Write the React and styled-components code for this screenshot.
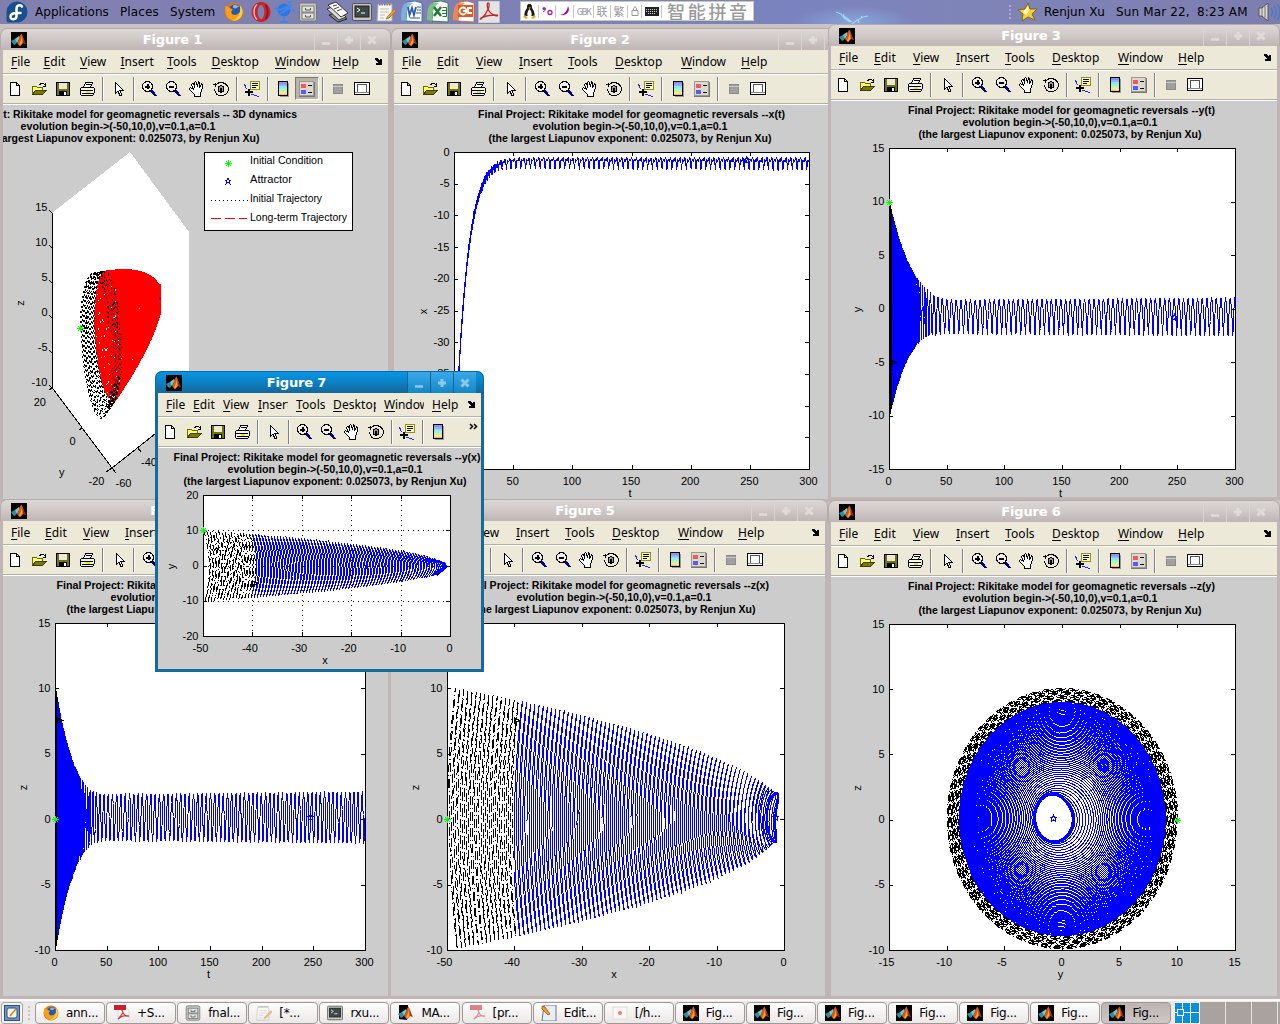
import React from "react";
import styled, { createGlobalStyle, css } from "styled-components";

const Global = createGlobalStyle`
  * { box-sizing: border-box; }
  html, body { margin: 0; padding: 0; overflow: hidden; }
`;

const Screen = styled.div`
  display: flex;
  flex-direction: column;
  width: 1280px;
  height: 1024px;
  overflow: hidden;
  background: #c9c3c2;
  font-family: "DejaVu Sans", sans-serif;
  color: #000;
`;

/* ---------- top panel ---------- */

const TopPanel = styled.header`
  display: flex;
  align-items: center;
  height: 24px;
  flex: none;
  padding-left: 6px;
  background:
    radial-gradient(ellipse 60px 16px at 854px 22px, #86a6d8 0%, rgba(125, 131, 184, 0) 100%),
    linear-gradient(90deg, #8080b0 0%, #7e80b3 35%, #7a83bf 62%, #7f84b8 75%, #7d7eae 100%);
`;
const PanelMenu = styled.nav`
  display: flex;
  margin-left: 7px;
  gap: 12px;
  font-size: 12px;
  width: 186px;
  white-space: nowrap;
`;
const MenuWord = styled.span`
  display: block;
  width: ${(p) => p.$w}px;
  letter-spacing: ${(p) => p.$ls || 0}px;
  white-space: nowrap;
`;
const Launchers = styled.div`
  display: flex;
  width: 284px;
  align-items: center;
`;
const Launcher = styled.span`
  display: flex;
  justify-content: center;
  flex: none;
  width: ${(p) => p.$w}px;
`;
const ImeBar = styled.div`
  display: flex;
  align-items: center;
  align-self: flex-start;
  margin-top: 1px;
  margin-left: 15px;
  width: 234px;
  height: 20px;
  background: #fff;
  border: 1px solid #c9c8bd;
  font-family: "Noto Sans CJK SC", sans-serif;
  color: #999;
  overflow: hidden;
`;
const ImeCell = styled.span`
  display: flex;
  align-items: center;
  justify-content: center;
  flex: none;
  width: ${(p) => p.$w}px;
  height: 13px;
  font-size: ${(p) => p.$fs || 11}px;
  line-height: 13px;
  letter-spacing: ${(p) => p.$ls || 0}px;
  border-right: 1px solid #ccc8b8;
`;
const ImeName = styled.span`
  margin-left: 5px;
  font-size: 18px;
  line-height: 18px;
  font-weight: 500;
  letter-spacing: 2.7px;
  color: #9a9a9a;
  white-space: nowrap;
`;
const Wallpaper = styled.span`
  display: flex;
  align-self: flex-end;
  width: 255px;
  padding-left: 81px;
`;
const PanelRight = styled.div`
  display: flex;
  align-items: center;
  font-size: 12px;
  white-space: nowrap;
`;
const UserBadge = styled.span`
  display: flex;
  justify-content: center;
  width: 32px;
`;

const SvgBox = styled.svg`
  display: block;
  flex: none;
`;
const Svg = ({ s = 16, w, h, vb, crisp, children }) => (
  <SvgBox width={w || s} height={h || s} viewBox={vb || "0 0 16 16"} shapeRendering={crisp ? "crispEdges" : "auto"}>
    {children}
  </SvgBox>
);

const Fedora = () => (
  <Svg s={22} vb="0 0 22 22">
    <path d="M11 0.5a10.5 10.5 0 1 1 0 21H2.5A2 2 0 0 1 .5 19.500V11A10.5 10.5 0 0 1 11 .5z" fill="#174f8f" />
    <path d="M16 5.500C15.500 4 11 3 10.500 7.500V15c0 4-6 4.500-6 .8 0-2.500 2.500-3.800 6-3.800h4" fill="none" stroke="#fff" strokeWidth="2.500" strokeLinecap="round" />
  </Svg>
);
const Firefox = ({ s = 20 }) => (
  <Svg s={s} vb="0 0 20 20">
    <circle cx="10" cy="10" r="9.300" fill="#e2730f" />
    <circle cx="11" cy="8.500" r="6" fill="#2a57a8" />
    <path d="M9 3.500c2-1 5 0 6 1l-3 2-3-.5z" fill="#7fb4e6" />
    <path d="M1.500 4C5 4.500 6 7 9 7.500 7.500 9 6.500 10 8 12c2 2 6 1 8-2 1 5-3 8-7 8S0 14 1.500 4z" fill="#f7a11b" />
    <path d="M16 3.500c3 3 3.500 8 1 11.500-2 3-6 4.500-9 3.500 5-1 9-5 8-15z" fill="#fbd23b" />
  </Svg>
);
const Opera = () => (
  <Svg s={22} vb="0 0 22 22">
    <path fillRule="evenodd" d="M11 1a9.500 10 0 1 0 .01 0zM11 4a3.300 7 0 1 1-.01 0z" fill="#c4282c" />
    <path d="M7 3.500C3 7 3 15 7 18.500" stroke="#f2b6b4" fill="none" strokeWidth="1.500" />
    <path d="M15.500 4c3 4 3 10 0 14" stroke="#8e1014" fill="none" strokeWidth="1.500" />
  </Svg>
);
const Globe = () => (
  <Svg s={22} vb="0 0 22 22">
    <circle cx="11" cy="9" r="6.500" fill="#2f76df" />
    <path d="M2 7l5 2 12-5M5 14l13-8M11 15v5M7 21h8" stroke="#3e86ec" strokeWidth="2" fill="none" />
    <path d="M15 2l4-2M19 9l3 1" stroke="#3e86ec" strokeWidth="2" />
  </Svg>
);
const Cabinet = ({ s = 20 }) => (
  <Svg s={s} vb="0 0 20 20">
    <rect x="1.500" y="1" width="17" height="18" rx="2" fill="#c9c9c2" stroke="#777" />
    <rect x="4" y="4" width="12" height="6" fill="#e4e4de" stroke="#777" />
    <rect x="4" y="11" width="12" height="6" fill="#e4e4de" stroke="#777" />
    <path d="M7.500 6v2h5V6M7.500 13v2h5v-2" stroke="#555" fill="none" />
  </Svg>
);
const Papers = () => (
  <Svg s={22} vb="0 0 22 22">
    <path d="M3 14l8-3 10 7-9 3z" fill="#888" stroke="#222" />
    <path d="M1 8l8-3 11 11-7 3z" fill="#ddd" stroke="#333" />
    <path d="M2 4l8-3 12 11-7 4z" fill="#fff" stroke="#333" />
    <path d="M7 5l4-1M8 8l5-2M11 10l5-2" stroke="#444" />
  </Svg>
);
const Terminal = ({ s = 20 }) => (
  <Svg s={s} vb="0 0 20 20">
    <rect x=".5" y="1.500" width="19" height="17" rx="1.500" fill="#c6c6be" stroke="#555" />
    <rect x="3" y="4" width="14" height="11" fill="#3d4849" stroke="#222" />
    <path d="M5 6l3 2-3 2M9 11h4" stroke="#fff" fill="none" />
  </Svg>
);
const Notepad = ({ s = 20 }) => (
  <Svg s={s} vb="0 0 20 20">
    <path d="M2 2h14v17H1z" fill="#f7f7f2" stroke="#aaa" />
    <path d="M3 2.500h12" stroke="#777" strokeWidth="2" strokeDasharray="1.500 1" />
    <path d="M4 7h9M4 10h9M4 13h5M4 16h4" stroke="#bbb" />
    <path d="M18.500 7l-7 7.500-1.500 2.500 3-1 7-7z" fill="#f29a2b" stroke="#b3600b" strokeWidth=".7" />
  </Svg>
);
const Office = ({ c1, c2, kind }) => (
  <Svg s={22} vb="0 0 22 22">
    <path d="M6 1l8-1 7 2v19l-16-1z" fill="#fdfdfd" stroke={c2} strokeWidth=".8" />
    <path d="M0 19C0 9 1 3 7 1l5 1C7 5 5 11 5 20z" fill={c1} opacity=".9" />
    {kind === "w" && <path d="M7 6l1.500 8 2.500-7 2 7L15 6" stroke={c2} strokeWidth="1.800" fill="none" />}
    {kind === "w" && <path d="M16 6h4M16 9h4M15 12h5M9 17h10" stroke={c2} strokeWidth="1" />}
    {kind === "x" && <path d="M7 6l7 9M14 6l-7 9" stroke={c2} strokeWidth="2.500" fill="none" />}
    {kind === "x" && <path d="M15.500 6.500h4v9h-4M15 9.500h5M15 12.500h5" stroke={c2} strokeWidth="1" fill="none" />}
    {kind === "p" && <rect x="5" y="4" width="15" height="12" fill={c2} />}
    {kind === "p" && (
      <g stroke="#fff" strokeWidth="1.800" fill="none">
        <circle cx="10" cy="10" r="3.500" />
        <path d="M19 7h-4v5h4M10 10h4" />
      </g>
    )}
  </Svg>
);
const Pdf = ({ s = 22 }) => (
  <Svg s={s} vb="0 0 22 22">
    <rect x=".5" y="0" width="21" height="22" fill="#e4e4e4" stroke="#bcbcbc" />
    <path d="M10 2c3 0 0 10-7 16-3 1 2-4 16-4 3 2-6 1-9-6-1-2-1-6 0-6z" fill="none" stroke="#c8232a" strokeWidth="1.300" />
  </Svg>
);
const PdfTask = () => (
  <Svg s={16}>
    <path d="M4 2h8l3 3v11H4z" fill="#f6f6f6" stroke="#ccc" strokeWidth=".6" />
    <rect x="0" y="0" width="12" height="5" fill="#c8202c" />
    <path d="M8 5c2 2-1 6-4 9 3-3 7-4 11-3-4 1-6-2-7-6z" fill="none" stroke="#d2383e" strokeWidth="1.200" />
  </Svg>
);
const Tux = () => (
  <Svg w={13} h={15} vb="0 0 13 15">
    <path d="M6.500 0c2.500 0 2.500 2 2.500 4 2 3 3 5 2.500 8h-10C1 9 2 7 4 4c0-2 0-4 2.500-4z" fill="#191919" />
    <path d="M6.500 5c2 2 3 5 1.500 8H5C3.500 10 4.500 7 6.500 5z" fill="#fff" />
    <path d="M5 3.500h3l-1.500 1.500zM0 13l2-2 3 3-2 1zM13 13l-2-2-3 3 2 1z" fill="#f0a81c" />
  </Svg>
);
const Lightning = () => (
  <Svg w={36} h={14} vb="0 0 36 14">
    <path d="M1 2l5 2 3 4 6 4M8 4l1 2 8 6M33 6l-5 1-7 4-4 3M24 13l-1-4M26 8l1-2" stroke="#a8dcff" strokeWidth="1.200" fill="none" opacity=".85" />
  </Svg>
);
const StarUser = () => (
  <Svg s={20} vb="0 0 20 20">
    <path d="M10 1l2 6 7 0-5 5 3 6-7-3-6 4 1-7-5-4 7-1z" fill="#f4d03a" stroke="#7a6a14" />
    <path d="M10 4l1 5-3 4-3-3z" fill="#fff6b8" />
  </Svg>
);
const Speaker = () => (
  <Svg w={22} h={20} vb="0 0 22 20">
    <path d="M1 6h3l6-5v18l-6-5H1z" fill="#d9d9d4" stroke="#555" />
    <path d="M4 6v8M7 4v12" stroke="#777" />
    <path d="M13 6c2 2 2 6 0 8M16 4c3 3 3 9 0 12M19 2c4 4 4 12 0 16" fill="none" stroke="#4b79c6" strokeWidth="1.500" />
  </Svg>
);
const Grip = ({ c = "#a9a9c9" }) => (
  <Svg w={3} h={16} vb="0 0 3 16" crisp>
    {[0, 4, 8, 12].map((y) => <rect key={y} x="0" y={y + 1} width="2" height="2" fill={c} />)}
  </Svg>
);
const MatlabLogo = ({ s = 16, plain }) => (
  <Svg s={s}>
    {!plain && <rect width="16" height="16" fill="#000" />}
    {plain && <path d="M1 0h9v8L9 15 1 14z" fill="#000" />}
    <path d="M0 9l4-2 2-1 1 2-2 4-2 1z" fill="#2f8f9f" />
    <path d="M4 7l4-3 1 2-3 5z" fill="#74c4c8" />
    <path d="M6 11c2-2 2-7 4.500-9.500C12 4 13 9 15 12l-3-1-3 3.500z" fill="#d9541a" />
    <path d="M10.300 2.500c.5 3-.3 7-2.300 10l1.200 1 2.300-3z" fill="#f7a427" />
    <path d="M11.500 4c1 3 1.500 5.500 3 7.500L12.500 11z" fill="#8c1d0c" />
  </Svg>
);

/* ---------- windows ---------- */

const Desktop = styled.main`
  position: relative;
  flex: 1;
  overflow: hidden;
`;
const Frame = styled.section`
  position: absolute;
  left: ${(p) => p.$x}px;
  top: ${(p) => p.$y - 24}px;
  width: ${(p) => p.$w}px;
  height: ${(p) => p.$h}px;
  display: flex;
  flex-direction: column;
  padding: 0 3px 3px;
  background: ${(p) => (p.$active ? "#146a98" : "#bfb5b5")};
  border-radius: 7px 7px 0 0;
  overflow: hidden;
`;
const TitleBar = styled.div`
  display: flex;
  align-items: center;
  height: 22px;
  flex: none;
  margin: 0 -3px;
  padding: 0 7px 0 10px;
  border: 1px solid ${(p) => (p.$active ? "#0c6ba5" : "#b4abaa")};
  border-bottom: 0;
  border-radius: 7px 7px 0 0;
  background: ${(p) =>
    p.$active
      ? "linear-gradient(#0695e6, #0b83c6 45%, #14679a)"
      : "linear-gradient(#dcd7d6, #cfc8c7 50%, #beb5b4)"};
`;
const TitleText = styled.h2`
  flex: 1;
  margin: 0;
  padding-left: 4px;
  text-align: center;
  font-size: 13px;
  font-weight: bold;
  line-height: 21px;
  letter-spacing: -0.15px;
  color: #fff;
`;
const TitleButton = styled.span`
  display: flex;
  align-items: center;
  justify-content: center;
  width: 23px;
  height: 21px;
  ${(p) =>
    p.$active
      ? css`
          background: linear-gradient(#37a9ea, #1786c4);
          border-left: 1px solid #0d659c;
          color: #8cc9ec;
        `
      : css`
          border-left: 1px solid #d9d4d3;
          color: #e0dbda;
        `}
`;
const Menu = styled.div`
  display: flex;
  align-items: center;
  height: 24px;
  flex: none;
  padding-left: 8px;
  background: #ece9d8;
  border-bottom: 1px solid #b3b1a4;
  font-family: "Noto Sans", sans-serif;
  font-size: 12px;
  line-height: 16px;
`;
const MenuItem = styled.span`
  flex: none;
  width: ${(p) => p.$w}px;
  margin-right: ${(p) => p.$gap}px;
  overflow: ${(p) => (p.$clip ? "hidden" : "visible")};
  white-space: nowrap;
  letter-spacing: ${(p) => p.$ls}px;
  u { text-underline-offset: 2px; }
`;
const MenuEnd = styled.span`
  display: flex;
  margin-left: auto;
  margin-right: 6px;
`;
const Toolbar = styled.div`
  display: flex;
  align-items: center;
  height: 31px;
  flex: none;
  padding-bottom: 2px;
  background: #ece9d8;
  border-top: 1px solid #fff;
  border-bottom: 1px solid #fff;
  box-shadow: inset 0 -1px #b3b1a4;
`;
const Tool = styled.span`
  display: flex;
  align-items: center;
  justify-content: center;
  flex: none;
  width: 24px;
  height: 23px;
  ${(p) =>
    p.$on &&
    css`
      border: 1px solid #777;
      border-right-color: #fff;
      border-bottom-color: #fff;
      background: #b9b5a6;
    `}
`;
const Separator = styled.i`
  flex: none;
  height: 24px;
  width: 2px;
  margin: 0 ${(p) => (p.$slot - 2) / 2}px;
  border-left: 1px solid #808080;
  border-right: 1px solid #fff;
`;
const More = styled.span`
  margin-left: auto;
  margin-right: 3px;
  align-self: flex-start;
  padding-top: 5px;
`;
const Canvas = styled.div`
  flex: 1;
  min-height: 0;
  background: #ccc;
  overflow: hidden;
`;

const tools = {
  new: <path d="M3.500 1.500h6l3 3v10h-9zM9.500 1.500v3h3" fill="#fff" stroke="#000" />,
  open: (
    <g>
      <path d="M1.500 13.500v-8h4l1 1h5v3" fill="#ffff66" stroke="#6b6b00" />
      <path d="M1.500 13.500l3-4h11l-4 4z" fill="#7a7a00" stroke="#3d3d00" />
      <path d="M8.500 3.500l2-1h2l2 2M14.500 2v3h-3" fill="none" stroke="#000" />
    </g>
  ),
  save: (
    <g>
      <rect x="1.500" y="1.500" width="13" height="13" fill="#737300" stroke="#000" />
      <rect x="4" y="2" width="8" height="6" fill="#ece9d8" />
      <rect x="4" y="10" width="8" height="4" fill="#000" />
      <rect x="9" y="11" width="2" height="3" fill="#fff" />
    </g>
  ),
  print: (
    <g>
      <path d="M4.500 6.500l2-5h7l-2 5z" fill="#fff" stroke="#000" />
      <path d="M1.500 7.500l2-1.500h11l1 1.500v4l-2 3h-11l-1-1z" fill="#f4f4ec" stroke="#000" />
      <path d="M1 9.500h13M3 12.500h11M7 3.500h5" stroke="#000" />
      <path d="M7 11h4" stroke="#f1ec00" strokeWidth="2" />
    </g>
  ),
  arrow: <path d="M5.500 1.500v11l2.500-2.500 2 5 2-1-2-4.500h3.500z" fill="#fff" stroke="#000" />,
  zin: (
    <g>
      <circle cx="6.500" cy="5.500" r="5" fill="#f1efe6" stroke="#000" />
      <path d="M4 5.500h5" stroke="#000" strokeWidth="2" />
      <path d="M6.500 3v5" stroke="#000" strokeWidth="2" />
      <path d="M10 9.500l5 5.500" stroke="#000080" strokeWidth="2.500" />
    </g>
  ),
  zout: (
    <g>
      <circle cx="6.500" cy="5.500" r="5" fill="#f1efe6" stroke="#000" />
      <path d="M4 5.500h5" stroke="#000" strokeWidth="2" />
      <path d="M10 9.500l5 5.500" stroke="#000080" strokeWidth="2.500" />
    </g>
  ),
  hand: <path d="M5.500 15.500v-2l-5-5v-1l1-1 3 2-2-5 1-1 1 .5 1.500 3.500-.5-5 1-1 1 1 1 4 1-4.500 1.500.5-.5 5 2-3.500 1.500.5-1 5-1.500 4v3z" fill="#fff" stroke="#000" />,
  rotate: (
    <g fill="none" stroke="#000">
      <path d="M2.500 4.500C5 .500 11 .500 14 4.500s.500 9-4 10-9-2-8-6.500M0 3.500h4M2 1.500v4" />
      <path d="M5.500 6l2.500-1.500L10.500 6v4L8 11.500 5.500 10z" fill="#999" />
      <path d="M8 7v4" strokeWidth="2" />
    </g>
  ),
  data: (
    <g>
      <path d="M.5 3l1 3 1 2M7 13l3 1 5 1.500" stroke="#2525ff" fill="none" />
      <path d="M1 11h8M5 7.500v7.500" stroke="#000" strokeWidth="2" />
      <rect x="6.500" y=".5" width="9" height="8" fill="#ffffa8" stroke="#918c26" />
      <path d="M8 2.500h6M8 4.500h6M8 6.500h4" stroke="#000" />
    </g>
  ),
  colorbar: (
    <g>
      <path d="M13.500 2v13.500H5" stroke="#999" fill="none" />
      {["#8f8ff5", "#8fb0f5", "#8fe3f5", "#96f3dc", "#c6f5a0", "#f5e790", "#f5b090"].map((c, i) => (
        <rect key={c} x="4" y={1 + i * 2} width="9" height="2" fill={c} />
      ))}
      <rect x="3.500" y=".5" width="9" height="14" fill="none" stroke="#000" />
    </g>
  ),
  legend: (
    <g>
      <rect x=".5" y=".5" width="14" height="14" fill="#ddd8cc" stroke="#999" />
      <path d="M0 15.500h15.500V1" fill="none" stroke="#777" />
      <rect x="2" y="3" width="5" height="4" fill="#ea5c62" />
      <rect x="2" y="9" width="5" height="4" fill="#5c5cea" />
      <path d="M9 4.500h4M9 11.500h4" stroke="#000" />
    </g>
  ),
  hide: (
    <g>
      <rect x="3.500" y="3.500" width="9" height="9" fill="#a0a0a0" stroke="#8b8b8b" />
      <path d="M3 5.500h10" stroke="#c8c8c0" />
    </g>
  ),
  dock: (
    <g>
      <rect x=".5" y="1.500" width="15" height="12" fill="#fff" stroke="#000" />
      <rect x="3.500" y="3.500" width="9" height="8" fill="#fff" stroke="#555" />
      <path d="M1 11.500h14" stroke="#888" />
    </g>
  ),
};
const toolOrder = ["new", "open", "save", "print", "|", "arrow", "|", "zin", "zout", "hand", "rotate", "|", "data", "|", "colorbar", "legend", "|", "hide", "dock"];
const menuWords = [
  ["File", 19, 0], ["Edit", 23, 0.1], ["View", 27, 0], ["Insert", 33, 0],
  ["Tools", 31, 0.1], ["Desktop", 50, 0.1], ["Window", 44, -0.1], ["Help", 28, 0.1],
];
const clippedWidths = [19, 22, 27, 30, 29, 43, 40, 28];

const Glyph = ({ kind }) => (
  <Svg s={12} vb="0 0 12 12">
    <path
      d={kind === "min" ? "M2 9.500h8" : kind === "max" ? "M6 2v8M2 6h8" : "M2.500 2.500l7 7M9.500 2.500l-7 7"}
      stroke="currentColor"
      strokeWidth={kind === "min" ? 2.500 : 3}
      fill="none"
    />
  </Svg>
);

function FigureWindow({ n, x, y, w, h, gap, slot, active, pressed, compact, children }) {
  const order = compact ? toolOrder.slice(0, 15) : toolOrder;
  return (
    <Frame $x={x} $y={y} $w={w} $h={h} $active={active}>
      <TitleBar $active={active}>
        <MatlabLogo />
        <TitleText>Figure {n}</TitleText>
        {["min", "max", "close"].map((k) => (
          <TitleButton key={k} $active={active}><Glyph kind={k} /></TitleButton>
        ))}
      </TitleBar>
      <Menu>
        {menuWords.map(([word, width, ls], i) => (
          <MenuItem key={word} $w={compact ? clippedWidths[i] : width} $gap={gap} $ls={ls} $clip={compact}>
            <u>{word[0]}</u>{word.slice(1)}
          </MenuItem>
        ))}
        <MenuEnd>
          <Svg w={7} h={7} vb="0 0 7 7" crisp>
            <path d="M0 0l2 0 3 3V1h2v6H1V5h2.500L0 1.500z" fill="#000" />
          </Svg>
        </MenuEnd>
      </Menu>
      <Toolbar>
        {order.map((t, i) =>
          t === "|" ? (
            <Separator key={i} $slot={slot} />
          ) : (
            <Tool key={i} $on={pressed && t === "legend"}><Svg crisp>{tools[t]}</Svg></Tool>
          )
        )}
        {compact && (
          <More>
            <Svg w={9} h={7} vb="0 0 9 7"><path d="M1 1l2.500 2.500L1 6M5 1l2.500 2.500L5 6" stroke="#000" strokeWidth="1.500" fill="none" /></Svg>
          </More>
        )}
      </Toolbar>
      <Canvas>
        <SvgBox width={w - 6} height={h - 80} viewBox={`${x + 3} ${y + 77} ${w - 6} ${h - 80}`}>
          {children}
        </SvgBox>
      </Canvas>
    </Frame>
  );
}

/* ---------- Rikitake dynamo: x' = -vx + zy, y' = -vy + (z-a)x, z' = 1 - xy ---------- */

const V = 0.1;
const A = 0.1;
const SPLIT = 2.2;

function integrate() {
  const f = (p) => [-V * p[0] + p[2] * p[1], -V * p[1] + (p[2] - A) * p[0], 1 - p[0] * p[1]];
  const add = (p, k, s) => [p[0] + k[0] * s, p[1] + k[1] * s, p[2] + k[2] * s];
  let p = [-50, 10, 0];
  let t = 0;
  const out = [[0, ...p]];
  let n = 0;
  while (t < 300) {
    const h = 0.025 / Math.max(1, Math.abs(p[0]));
    const k1 = f(p);
    const k2 = f(add(p, k1, h / 2));
    const k3 = f(add(p, k2, h / 2));
    const k4 = f(add(p, k3, h));
    p = p.map((c, i) => c + (h / 6) * (k1[i] + 2 * k2[i] + 2 * k3[i] + k4[i]));
    t += h;
    n += 1;
    if (n % 5 === 0) out.push([t, ...p]);
  }
  return out;
}
const orbit = integrate();
const early = orbit.filter((p) => p[0] <= SPLIT);
const late = orbit.filter((p) => p[0] >= SPLIT && p[0] <= 300);
const trace = (pts, map) => "M" + pts.map((p) => map(p).map((c) => c.toFixed(1)).join(" ")).join("L");

const Label = styled.text`
  font-family: "Liberation Sans", sans-serif;
  font-size: 11px;
  fill: #000;
`;
const Heading = styled.text`
  font-family: "Liberation Sans", sans-serif;
  font-size: 11px;
  font-weight: bold;
  text-anchor: middle;
  fill: #000;
`;

const Titles = ({ cx, y, first, w1 = 307, cx1 }) => (
  <g>
    <Heading x={cx1 || cx + 1.5} y={y} textLength={w1} lengthAdjust="spacingAndGlyphs">{`Final Project: Rikitake model for geomagnetic reversals ${first}`}</Heading>
    <Heading x={cx} y={y + 12} textLength={195} lengthAdjust="spacingAndGlyphs">evolution begin-&gt;(-50,10,0),v=0.1,a=0.1</Heading>
    <Heading x={cx} y={y + 24} textLength={283} lengthAdjust="spacingAndGlyphs">(the largest Liapunov exponent: 0.025073, by Renjun Xu)</Heading>
  </g>
);

const Asterisk = ({ x, y }) => (
  <path d={`M${x - 3.5} ${y}h7M${x} ${y - 3.5}v7M${x - 2.5} ${y - 2.5}l5 5M${x + 2.5} ${y - 2.5}l-5 5`} stroke="#0f0" fill="none" />
);
const Pentagram = ({ x, y }) => (
  <path d={`M${x} ${y - 3}l1 2h2l-1.500 1.500 .5 2.500-2-1.500-2 1.500 .5-2.500-1.500-1.500h2z`} stroke="#00f" fill="none" />
);
const Flag = ({ x, y }) => <path d={`M${x - 2} ${y - 2.5}v5l5-2.500z`} stroke="#000" fill="none" />;

function Plot({ box, xr, yr, xt, yt, xl, yl, yLabelX, xLabelY, ix, iy, grid, start, flag, attractor, tickY, dash = "6 3 1 3" }) {
  const [x0, y0, x1, y1] = box;
  const sx = (v) => x0 + ((v - xr[0]) / (xr[1] - xr[0])) * (x1 - x0) + 0.5;
  const sy = (v) => y1 - ((v - yr[0]) / (yr[1] - yr[0])) * (y1 - y0) + 0.5;
  const map = (p) => [sx(p[ix]), sy(p[iy])];
  const r = (v) => Math.floor(v) + 0.5;
  const my = (y0 + y1) / 2;
  return (
    <g>
      <rect x={x0} y={y0} width={x1 - x0} height={y1 - y0} fill="#fff" />
      <g shapeRendering="crispEdges" fill="none" stroke="#000">
        {grid && xt.map((v) => <path key={`gx${v}`} d={`M${r(sx(v))} ${y0}V${y1}`} strokeDasharray="1 4" />)}
        {grid && yt.map((v) => <path key={`gy${v}`} d={`M${x0} ${r(sy(v))}H${x1}`} strokeDasharray="1 4" />)}
        <rect x={x0 + 0.5} y={y0 + 0.5} width={x1 - x0} height={y1 - y0} />
        {xt.map((v) => <path key={v} d={`M${r(sx(v))} ${y0}v4M${r(sx(v))} ${y1}v-4`} />)}
        {yt.map((v) => <path key={v} d={`M${x0} ${r(sy(v))}h4M${x1} ${r(sy(v))}h-4`} />)}
        <path d={trace(early, map)} strokeDasharray={dash} />
        <path d={trace(late, map)} stroke="#00f" />
        <Asterisk x={r(sx(start[0]))} y={r(sy(start[1]))} />
        {flag && <Flag x={r(sx(flag[0]))} y={r(sy(flag[1]))} />}
        {attractor && <Pentagram x={r(sx(attractor[0]))} y={r(sy(attractor[1]))} />}
      </g>
      {xt.map((v) => <Label key={v} x={sx(v) - 1 - (v < 0 ? 2 : 0)} y={tickY} textAnchor="middle">{v}</Label>)}
      {yt.map((v) => <Label key={v} x={x0 - 4.5} y={sy(v) + 3} textAnchor="end">{v}</Label>)}
      <Label x={(x0 + x1) / 2 - 1.5} y={xLabelY} textAnchor="middle">{xl}</Label>
      <Label transform={`translate(${yLabelX} ${my + 1}) rotate(-90)`} textAnchor="middle">{yl}</Label>
    </g>
  );
}

const T = [0, 50, 100, 150, 200, 250, 300];
const X = [-50, -40, -30, -20, -10, 0];
const Z = [15, 10, 5, 0, -5, -10];

function Scene3D() {
  const map = ([, x, y, z]) => [52.5 + (20 - y) * 1.5 + (x + 60) * 1.3, 388 + (20 - y) * 2 - (x + 60) * 1.01 - (z + 10) * 7];
  return (
    <g>
      <path d="M52 213L130 152L189 232V407L112 468L52 388z" fill="#fff" shapeRendering="crispEdges" />
      <g shapeRendering="crispEdges" fill="none" stroke="#000">
        <path d="M52.500 213V388L112 468L189 407" />
        {Z.map((v) => <path key={v} d={`M52.500 ${388.5 - (v + 10) * 7}l-3 -3`} />)}
        <path d="M52 388l-3 2M82 428l-3 2M112 468l-6 4M112 468l4 5M138 448l3 4" />
        <path d={trace(late, map)} stroke="#f00" strokeWidth="1.500" strokeDasharray="12 2" />
        <path d={trace(early, map)} strokeDasharray="2 3" />
        <path d={trace(late.filter((p) => p[0] < 6 && p[2] > 1.5), map)} stroke="#f00" strokeDasharray="2 3" />
        <Asterisk x={80.5} y={328.5} />
        <path d="M159 298.500h2" stroke="#00f" />
      </g>
      {Z.map((v) => <Label key={v} x={47.5} y={386 - (v + 10) * 7} textAnchor="end">{v}</Label>)}
      <Label x="46" y="406" textAnchor="end">20</Label>
      <Label x="75.500" y="445" textAnchor="end">0</Label>
      <Label x="104.500" y="485" textAnchor="end">-20</Label>
      <Label x="115.500" y="487">-60</Label>
      <Label x="141" y="466">-40</Label>
      <Label x="59" y="476">y</Label>
      <Label transform="translate(24 303) rotate(-90)" textAnchor="middle">z</Label>
      <g shapeRendering="crispEdges" fill="none" stroke="#000">
        <rect x="204.500" y="152.500" width="148" height="78" fill="#fff" />
        <Asterisk x={228.5} y={163.5} />
        <Pentagram x={228} y={181} />
        <path d="M211 200.500h37" strokeDasharray="1 3" />
        <path d="M211 218.500h36" stroke="#f00" strokeDasharray="10 4" />
      </g>
      <Label x="250" y="164" textLength="73" lengthAdjust="spacingAndGlyphs">Initial Condition</Label>
      <Label x="250" y="183" textLength="42" lengthAdjust="spacingAndGlyphs">Attractor</Label>
      <Label x="250" y="202" textLength="72" lengthAdjust="spacingAndGlyphs">Initial Trajectory</Label>
      <Label x="250" y="221" textLength="97" lengthAdjust="spacingAndGlyphs">Long-term Trajectory</Label>
    </g>
  );
}

/* ---------- taskbar ---------- */

const Taskbar = styled.footer`
  display: flex;
  align-items: center;
  height: 25px;
  flex: none;
  background: #ece9e8;
  border-top: 2px solid #fbfafa;
  padding-left: 1px;
`;
const ShowDesktop = styled.span`
  display: flex;
  align-items: center;
  justify-content: center;
  width: 22px;
  height: 22px;
  border: 1px solid #a9a3a2;
  border-radius: 3px;
  background: #f4f2f1;
`;
const GripSlot = styled.span`
  display: flex;
  justify-content: center;
  width: 12px;
`;
const TaskList = styled.div`
  display: flex;
  gap: 1.1px;
`;
const Task = styled.span`
  display: flex;
  align-items: center;
  gap: 7px;
  flex: none;
  width: 70px;
  height: 22px;
  padding-left: 7px;
  border: 1px solid #9e9897;
  border-radius: 4px;
  background: ${(p) => (p.$active ? "linear-gradient(#bdb4b3, #cdc7c6)" : "linear-gradient(#fdfdfd, #ebe8e7)")};
  font-size: 12px;
  letter-spacing: -0.3px;
  white-space: nowrap;
  overflow: hidden;
`;
const Pager = styled.span`
  display: flex;
  flex: none;
  margin-left: 2.500px;
  width: 106px;
  height: 22px;
  background: #aaa29f;
`;
const Workspace = styled.span`
  flex: none;
  width: 26px;
  border-right: 1px solid #e6e3e2;
`;

const EditIcon = () => (
  <Svg>
    <path d="M3 0h12v16H1z" fill="#e9eef5" stroke="#6a7687" />
    <path d="M1 1l3 1 5 7-2 1L1 4z" fill="#f39a2e" stroke="#703f05" strokeWidth=".6" />
  </Svg>
);
const MailIcon = () => (
  <Svg>
    <rect x="1" y="2" width="14" height="12" fill="#fdf6f5" stroke="#ddd" />
    <circle cx="8" cy="8" r="2" fill="#ee7d7a" />
  </Svg>
);
const TaskIcon = styled.span`
  opacity: ${(p) => (p.$faded ? 0.55 : 1)};
`;

const tasks = [
  ["ann...", <Firefox s={16} />], ["+S...", <PdfTask />], ["fnal...", <Cabinet s={16} />], ["[*...", <Notepad s={16} />, true],
  ["rxu...", <Terminal s={16} />], ["MA...", <MatlabLogo plain />], ["[pr...", <PdfTask />, true], ["Edit...", <EditIcon />],
  ["[/h...", <MailIcon />], ...Array.from({ length: 7 }, () => ["Fig...", <MatlabLogo />]),
];

export default function App() {
  return (
    <Screen>
      <Global />
      <TopPanel>
        <Fedora />
        <PanelMenu>
          <MenuWord $w={73} $ls={0.05}>Applications</MenuWord>
          <MenuWord $w={38} $ls={0.1}>Places</MenuWord>
          <MenuWord $w={46} $ls={0.1}>System</MenuWord>
        </PanelMenu>
        <Launchers>
          <Launcher $w={26}><Firefox /></Launcher>
          <Launcher $w={27}><Opera /></Launcher>
          <Launcher $w={20}><Globe /></Launcher>
          <Launcher $w={28}><Cabinet /></Launcher>
          <Launcher $w={30}><Papers /></Launcher>
          <Launcher $w={20}><Terminal /></Launcher>
          <Launcher $w={28}><Notepad /></Launcher>
          <Launcher $w={24}><Office c1="#7db4e6" c2="#2a5db0" kind="w" /></Launcher>
          <Launcher $w={28}><Office c1="#7cc47f" c2="#1f7a34" kind="x" /></Launcher>
          <Launcher $w={24}><Office c1="#f5874a" c2="#e0571f" kind="p" /></Launcher>
          <Launcher $w={26}><Pdf /></Launcher>
        </Launchers>
        <ImeBar>
          <ImeCell $w={18}><Tux /></ImeCell>
          <ImeCell $w={17}>
            <Svg w={11} h={10} vb="0 0 11 10"><circle cx="2" cy="2.500" r="1.500" fill="#a020a0" /><path d="M3.500 2.500c0 2-1 3-2.500 3" stroke="#a020a0" fill="none" /><circle cx="8" cy="6.500" r="2" stroke="#a020a0" strokeWidth="1.300" fill="none" /></Svg>
          </ImeCell>
          <ImeCell $w={18}>
            <Svg w={10} h={10} vb="0 0 10 10"><path d="M8 0c3 6-2 10-8 9 5-1 7-4 8-9z" fill="#a010a0" /></Svg>
          </ImeCell>
          <ImeCell $w={20} $fs={9} $ls={-1.5}>GBK</ImeCell>
          <ImeCell $w={17}>联</ImeCell>
          <ImeCell $w={17}>繁</ImeCell>
          <ImeCell $w={14}>
            <Svg w={8} h={10} vb="0 0 8 10"><path d="M1 4.500h6v5H1zM2.500 4.500v-2l1.500-2 1.500 2v2" fill="none" stroke="#999" /></Svg>
          </ImeCell>
          <ImeCell $w={20}>
            <Svg w={14} h={9} vb="0 0 14 9" crisp><rect width="14" height="9" fill="#222" /><path d="M1 2.500h12M1 4.500h12M3 6.500h8" stroke="#ccc" strokeDasharray="1 1" /></Svg>
          </ImeCell>
          <ImeName>智能拼音</ImeName>
        </ImeBar>
        <Wallpaper><Lightning /></Wallpaper>
        <PanelRight>
          <Grip />
          <UserBadge><StarUser /></UserBadge>
          <MenuWord $w={72}>Renjun Xu</MenuWord>
          <MenuWord $w={81} $ls={0.15}>Sun Mar 22,</MenuWord>
          <MenuWord $w={61} $ls={0.2}>8:23 AM</MenuWord>
          <Speaker />
        </PanelRight>
      </TopPanel>
      <Desktop>
        <FigureWindow n={1} x={0} y={28} w={391} h={474} gap={13.5} slot={7} pressed>
          <Titles cx={118} y={118} first="-- 3D dynamics" w1={353} cx1={120.5} />
          <Scene3D />
        </FigureWindow>
        <FigureWindow n={2} x={391} y={28} w={464} h={474} gap={16} slot={8}>
          <Titles cx={630} y={118} first="--x(t)" />
          <Plot box={[454, 152, 809, 469]} xr={[0, 300]} yr={[-50, 0]} xt={T} yt={[0, -5, -10, -15, -20, -25, -30, -35, -40, -45]} xl="t" yl="x" ix={0} iy={1} yLabelX={427} xLabelY={497} tickY={485} start={[0, -50]} attractor={[247, -1.27]} />
        </FigureWindow>
        <FigureWindow n={4} x={0} y={499} w={406} h={500} gap={15} slot={7.5}>
          <Titles cx={208} y={589} first="--z(t)" cx1={210} />
          <Plot box={[55, 623, 365, 950]} xr={[0, 300]} yr={[-10, 15]} xt={T} yt={Z} xl="t" yl="z" ix={0} iy={3} yLabelX={27} xLabelY={978} tickY={966} start={[0, 0]} flag={[4, 7.6]} attractor={[247, 0.16]} />
        </FigureWindow>
        <FigureWindow n={3} x={828} y={24} w={452} h={476} gap={16} slot={8}>
          <Titles cx={1060} y={114} first="--y(t)" />
          <Plot box={[889, 148, 1235, 469]} xr={[0, 300]} yr={[-15, 15]} xt={T} yt={[15, 10, 5, 0, -5, -10, -15]} xl="t" yl="y" ix={0} iy={2} yLabelX={861} xLabelY={497} tickY={485} start={[0, 10]} flag={[3, -5]} attractor={[247, -0.78]} />
        </FigureWindow>
        <FigureWindow n={5} x={388} y={499} w={440} h={500} gap={16} slot={8}>
          <Titles cx={614} y={589} first="--z(x)" />
          <Plot box={[447, 623, 784, 950]} xr={[-50, 0]} yr={[-10, 15]} xt={X} yt={Z} xl="x" yl="z" ix={1} iy={3} yLabelX={419} xLabelY={978} tickY={966} start={[-50, 0]} flag={[-39.7, 7.6]} attractor={[-1.27, 0.16]} dash="9 3 1 3" />
        </FigureWindow>
        <FigureWindow n={6} x={828} y={500} w={452} h={499} gap={16} slot={8}>
          <Titles cx={1060} y={590} first="--z(y)" />
          <Plot box={[889, 624, 1235, 950]} xr={[-15, 15]} yr={[-10, 15]} xt={[-15, -10, -5, 0, 5, 10, 15]} yt={Z} xl="y" yl="z" ix={2} iy={3} yLabelX={861} xLabelY={978} tickY={966} start={[10, 0]} attractor={[-0.78, 0.16]} />
        </FigureWindow>
        <FigureWindow n={7} x={155} y={371} w={329} h={301} gap={8} slot={7} active compact>
          <Titles cx={325} y={461} first="--y(x)" cx1={327} />
          <Plot box={[203, 495, 450, 636]} xr={[-50, 0]} yr={[-20, 20]} xt={X} yt={[20, 10, 0, -10, -20]} xl="x" yl="y" ix={1} iy={2} yLabelX={175} xLabelY={664} tickY={652} grid start={[-50, 10]} flag={[-39.7, -5]} />
        </FigureWindow>
      </Desktop>
      <Taskbar>
        <ShowDesktop>
          <Svg>
            <rect x=".5" y=".5" width="15" height="15" fill="#6f94c4" stroke="#2c4f80" />
            <rect x="3" y="3" width="10" height="10" rx="2" fill="#f6f3e4" stroke="#2c4f80" />
            <path d="M12 4l-6 7" stroke="#c28b1d" strokeWidth="1.500" />
          </Svg>
        </ShowDesktop>
        <GripSlot><Grip c="#c9c5c4" /></GripSlot>
        <TaskList>
          {tasks.map(([label, icon, faded], i) => (
            <Task key={i} $active={i === 15}>
              <TaskIcon $faded={faded}>{icon}</TaskIcon>
              {label}
            </Task>
          ))}
        </TaskList>
        <Pager>
          <Workspace>
            <Svg w={26} h={22} vb="0 0 26 22" crisp>
              <rect width="26" height="22" fill="#fff" />
              <path d="M1 1h7v9H1zM9 1h7v9H9zM17 1h8v9h-8zM1 11h7v10H1zM9 11h7v10H9zM17 11h8v10h-8z" fill="#0a8fdc" />
              <rect x="3.500" y="7.500" width="6" height="6" fill="#0a8fdc" stroke="#fff" />
            </Svg>
          </Workspace>
          <Workspace /><Workspace /><Workspace />
        </Pager>
      </Taskbar>
    </Screen>
  );
}
